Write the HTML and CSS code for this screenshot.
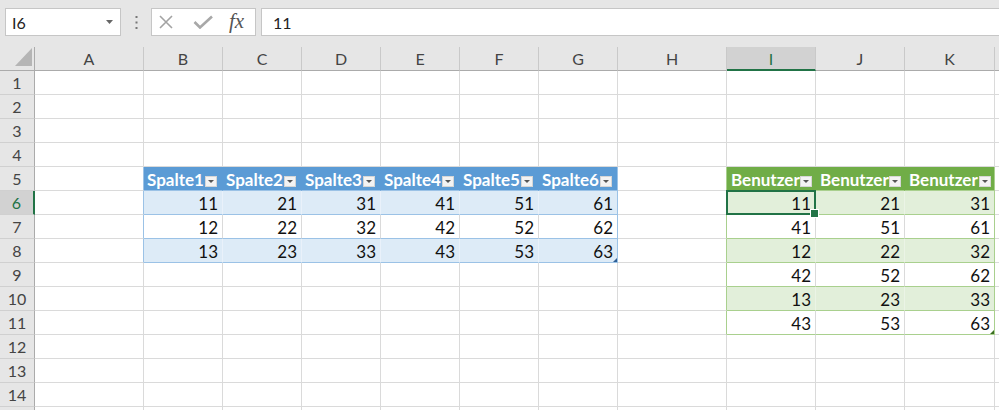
FILE: index.html
```html
<!DOCTYPE html>
<html lang="de">
<head>
<meta charset="utf-8">
<title>Excel</title>
<link rel="stylesheet" href="styles.css">
</head>
<body>
<div class="bar">
  <div class="namebox"><span class="nb-text">I6</span><svg class="nb-arrow" width="7" height="4" viewBox="0 0 7 4"><polygon points="0,0 7,0 3.5,4" fill="#666"/></svg></div>
  <div class="dots"><svg width="3" height="13" viewBox="0 0 3 13"><rect x="0.5" y="0" width="2" height="2" fill="#777"/><rect x="0.5" y="5.5" width="2" height="2" fill="#777"/><rect x="0.5" y="11" width="2" height="2" fill="#777"/></svg></div>
  <div class="fxbox">
    <svg class="ic-x" width="14" height="14" viewBox="0 0 14 14"><path d="M1 1 L13 13 M13 1 L1 13" stroke="#a3a3a3" stroke-width="1.6" fill="none"/></svg>
    <svg class="ic-ok" width="20" height="14" viewBox="0 0 20 14"><path d="M1.5 7 L7 12.5 L19 1.5" stroke="#a8a8a8" stroke-width="2.6" fill="none"/></svg>
    <span class="fx">fx</span>
  </div>
  <div class="formula">11</div>
</div>
<div class="sheet">
  <div class="ch corner"><svg width="17" height="18" viewBox="0 0 17 18"><polygon points="17,0 17,18 0,18" fill="#b5b5b5"/></svg></div>
  <div class="ch">A</div><div class="ch">B</div><div class="ch">C</div><div class="ch">D</div><div class="ch">E</div><div class="ch">F</div><div class="ch">G</div><div class="ch">H</div><div class="ch sel">I</div><div class="ch">J</div><div class="ch">K</div><div class="ch"></div>

  <div class="rh">1</div><div class="c"></div><div class="c"></div><div class="c"></div><div class="c"></div><div class="c"></div><div class="c"></div><div class="c"></div><div class="c"></div><div class="c"></div><div class="c"></div><div class="c"></div><div class="c"></div>
  <div class="rh">2</div><div class="c"></div><div class="c"></div><div class="c"></div><div class="c"></div><div class="c"></div><div class="c"></div><div class="c"></div><div class="c"></div><div class="c"></div><div class="c"></div><div class="c"></div><div class="c"></div>
  <div class="rh">3</div><div class="c"></div><div class="c"></div><div class="c"></div><div class="c"></div><div class="c"></div><div class="c"></div><div class="c"></div><div class="c"></div><div class="c"></div><div class="c"></div><div class="c"></div><div class="c"></div>
  <div class="rh">4</div><div class="c"></div><div class="c"></div><div class="c"></div><div class="c"></div><div class="c"></div><div class="c"></div><div class="c"></div><div class="c"></div><div class="c"></div><div class="c"></div><div class="c"></div><div class="c"></div>

  <div class="rh">5</div><div class="c tl1"></div>
  <div class="c t1h"><span class="lbl">Spalte1</span><span class="dd"></span></div>
  <div class="c t1h"><span class="lbl">Spalte2</span><span class="dd"></span></div>
  <div class="c t1h"><span class="lbl">Spalte3</span><span class="dd"></span></div>
  <div class="c t1h"><span class="lbl">Spalte4</span><span class="dd"></span></div>
  <div class="c t1h"><span class="lbl">Spalte5</span><span class="dd"></span></div>
  <div class="c t1h te1"><span class="lbl">Spalte6</span><span class="dd"></span></div>
  <div class="c tl2"></div>
  <div class="c t2h"><span class="lbl">Benutzer</span><span class="dd"></span></div>
  <div class="c t2h"><span class="lbl">Benutzer</span><span class="dd"></span></div>
  <div class="c t2h te2"><span class="lbl">Benutzer</span><span class="dd"></span></div>
  <div class="c"></div>

  <div class="rh sel">6</div><div class="c tl1"></div>
  <div class="c t1b">11</div><div class="c t1b">21</div><div class="c t1b">31</div><div class="c t1b">41</div><div class="c t1b">51</div><div class="c t1b te1">61</div>
  <div class="c tl2"></div>
  <div class="c t2b active">11</div><div class="c t2b">21</div><div class="c t2b te2">31</div>
  <div class="c"></div>

  <div class="rh">7</div><div class="c tl1"></div>
  <div class="c t1w">12</div><div class="c t1w">22</div><div class="c t1w">32</div><div class="c t1w">42</div><div class="c t1w">52</div><div class="c t1w te1">62</div>
  <div class="c tl2"></div>
  <div class="c t2w">41</div><div class="c t2w">51</div><div class="c t2w te2">61</div>
  <div class="c"></div>

  <div class="rh">8</div><div class="c tl1"></div>
  <div class="c t1b">13</div><div class="c t1b">23</div><div class="c t1b">33</div><div class="c t1b">43</div><div class="c t1b">53</div><div class="c t1b te1 rz1">63</div>
  <div class="c tl2"></div>
  <div class="c t2b">12</div><div class="c t2b">22</div><div class="c t2b te2">32</div>
  <div class="c"></div>

  <div class="rh">9</div><div class="c"></div><div class="c"></div><div class="c"></div><div class="c"></div><div class="c"></div><div class="c"></div><div class="c"></div>
  <div class="c tl2"></div>
  <div class="c t2w">42</div><div class="c t2w">52</div><div class="c t2w te2">62</div>
  <div class="c"></div>

  <div class="rh">10</div><div class="c"></div><div class="c"></div><div class="c"></div><div class="c"></div><div class="c"></div><div class="c"></div><div class="c"></div>
  <div class="c tl2"></div>
  <div class="c t2b">13</div><div class="c t2b">23</div><div class="c t2b te2">33</div>
  <div class="c"></div>

  <div class="rh">11</div><div class="c"></div><div class="c"></div><div class="c"></div><div class="c"></div><div class="c"></div><div class="c"></div><div class="c"></div>
  <div class="c tl2"></div>
  <div class="c t2w">43</div><div class="c t2w">53</div><div class="c t2w te2 rz2">63</div>
  <div class="c"></div>

  <div class="rh">12</div><div class="c"></div><div class="c"></div><div class="c"></div><div class="c"></div><div class="c"></div><div class="c"></div><div class="c"></div><div class="c"></div><div class="c"></div><div class="c"></div><div class="c"></div><div class="c"></div>
  <div class="rh">13</div><div class="c"></div><div class="c"></div><div class="c"></div><div class="c"></div><div class="c"></div><div class="c"></div><div class="c"></div><div class="c"></div><div class="c"></div><div class="c"></div><div class="c"></div><div class="c"></div>
  <div class="rh">14</div><div class="c"></div><div class="c"></div><div class="c"></div><div class="c"></div><div class="c"></div><div class="c"></div><div class="c"></div><div class="c"></div><div class="c"></div><div class="c"></div><div class="c"></div><div class="c"></div>
  <div class="rh"></div><div class="c"></div><div class="c"></div><div class="c"></div><div class="c"></div><div class="c"></div><div class="c"></div><div class="c"></div><div class="c"></div><div class="c"></div><div class="c"></div><div class="c"></div><div class="c"></div>
</div>
</body>
</html>
```

FILE: styles.css
```css
* { box-sizing: border-box; }

html, body {
  margin: 0;
  padding: 0;
  width: 999px;
  height: 410px;
  overflow: hidden;
  background: #fff;
  font-family: Lato, "Open Sans", sans-serif;
}

/* formula bar */
.bar {
  height: 47px;
  background: #e6e6e6;
  display: flex;
  align-items: flex-start;
  padding: 8px 0 0 5px;
}

.namebox {
  width: 116px;
  height: 28px;
  background: #fff;
  border: 1px solid #c6c6c6;
  display: flex;
  align-items: center;
  padding: 0 7px 0 6px;
  font-size: 16px;
  color: #222;
}

.nb-text { flex: 1; }

.dots {
  width: 30px;
  height: 28px;
  display: flex;
  align-items: center;
  justify-content: center;
}

.fxbox {
  width: 105px;
  height: 28px;
  background: #fff;
  border: 1px solid #c6c6c6;
  display: flex;
  align-items: center;
  padding-left: 7px;
}

.ic-ok { margin-left: 20px; }

.fx {
  margin-left: 16px;
  font-family: "Liberation Serif", "DejaVu Serif", serif;
  font-style: italic;
  font-size: 21px;
  color: #555;
  line-height: 1;
  padding-bottom: 2px;
}

.formula {
  flex: 1;
  margin-left: 5px;
  height: 28px;
  background: #fff;
  border: 1px solid #c6c6c6;
  border-right: none;
  display: flex;
  align-items: center;
  padding-left: 11px;
  font-size: 16px;
  color: #222;
}

/* sheet grid */
.sheet {
  display: grid;
  grid-template-columns: 35px 109px repeat(6, 79px) 109px 89px 89px 90px 1fr;
  grid-auto-rows: 24px;
  height: 363px;
  overflow: hidden;
  font-size: 17px;
  color: #111;
}

.ch {
  background: #e6e6e6;
  border-right: 1px solid #c9c9c9;
  border-bottom: 1px solid #ababab;
  display: flex;
  align-items: center;
  justify-content: center;
  color: #444;
  font-size: 16px;
}

.ch.corner {
  justify-content: flex-end;
  align-items: flex-end;
  padding: 0 2px 4px 0;
  border-right-color: #ababab;
}

.ch.sel {
  background: #d2d2d2;
  color: #217346;
  border-bottom: 2px solid #217346;
}

.rh {
  background: #e6e6e6;
  border-right: 1px solid #ababab;
  border-bottom: 1px solid #d0d0d0;
  display: flex;
  align-items: center;
  justify-content: center;
  color: #444;
  font-size: 16px;
}

.rh.sel {
  background: #d2d2d2;
  color: #217346;
  border-right: 2px solid #217346;
}

.c {
  position: relative;
  border-right: 1px solid #dadada;
  border-bottom: 1px solid #dadada;
  display: flex;
  align-items: flex-end;
  justify-content: flex-end;
  padding-right: 4px;
  line-height: 20px;
  white-space: nowrap;
  overflow: hidden;
}

/* table edges */
.tl1 { border-right-color: #9bc2e6; }
.tl2 { border-right-color: #a9d08e; }

/* table 1 (blue) */
.t1h {
  background: #5b9bd5;
  color: #fff;
  font-weight: 700;
  font-size: 17px;
  justify-content: flex-start;
  align-items: center;
  padding-left: 3px;
  padding-right: 5px;
  border-right-color: #5b9bd5;
  border-bottom-color: #9bc2e6;
}

.t1b {
  background: #ddebf7;
  border-right-color: #e9f1fa;
  border-bottom-color: #9bc2e6;
}

.t1w {
  border-bottom-color: #9bc2e6;
}

.te1 { border-right-color: #9bc2e6; }

/* table 2 (green) */
.t2h {
  background: #70ad47;
  color: #fff;
  font-weight: 700;
  font-size: 17px;
  justify-content: flex-start;
  align-items: center;
  padding-left: 4px;
  padding-right: 3px;
  border-right-color: #70ad47;
  border-bottom-color: #a9d08e;
}

.t2b {
  background: #e2efda;
  border-right-color: #ebf4e6;
  border-bottom-color: #a9d08e;
}

.t2w {
  border-bottom-color: #a9d08e;
}

.te2 { border-right-color: #a9d08e; }

.lbl {
  flex: 1;
  min-width: 0;
  overflow: hidden;
  white-space: nowrap;
  line-height: 20px;
  padding-top: 2px;
}

.dd {
  flex: none;
  align-self: flex-end;
  margin-bottom: 3px;
  width: 12px;
  height: 11px;
  background: #f3f3f3;
  border: 1px solid #d6d6d6;
  position: relative;
}

.dd::after {
  content: "";
  position: absolute;
  left: 2px;
  top: 3px;
  border-left: 3px solid transparent;
  border-right: 3px solid transparent;
  border-top: 3px solid #555;
}

/* active cell */
.active {
  overflow: visible;
  z-index: 2;
}

.active::before {
  content: "";
  position: absolute;
  left: -1px;
  top: -1px;
  right: -1px;
  bottom: -1px;
  border: 2px solid #217346;
}

.active::after {
  content: "";
  position: absolute;
  right: -4px;
  bottom: -4px;
  width: 7px;
  height: 7px;
  background: #217346;
  border: 1px solid #fff;
}

/* table resize handles */
.rz1::after,
.rz2::after {
  content: "";
  position: absolute;
  right: 0;
  bottom: 0;
  width: 0;
  height: 0;
  border-left: 4px solid transparent;
}

.rz1::after { border-bottom: 4px solid #2f5f96; }
.rz2::after { border-bottom: 4px solid #3b6e22; }
```
